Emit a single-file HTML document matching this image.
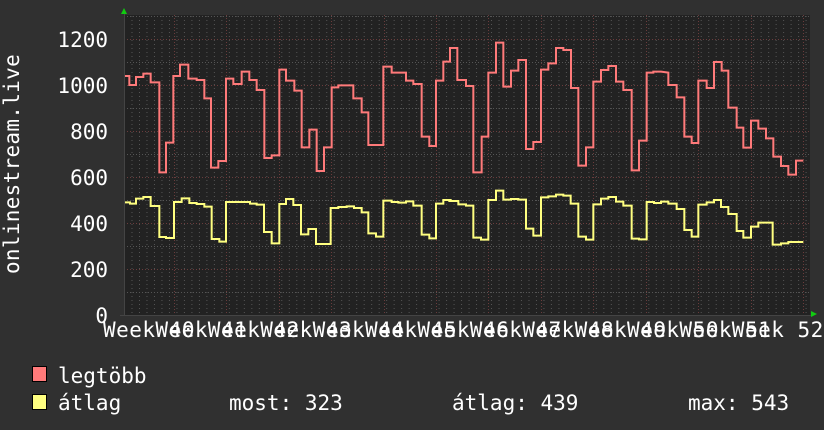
<!DOCTYPE html>
<html><head><meta charset="utf-8"><style>
html,body{margin:0;padding:0;background:#303030;}
svg{display:block}
text{font-family:"DejaVu Sans Mono","Liberation Mono",monospace;fill:#fff;font-size:21px}
</style></head><body>
<svg width="824" height="430" viewBox="0 0 824 430">
<defs>
<pattern id="vmin" x="124" y="0" width="7.49" height="4" patternUnits="userSpaceOnUse">
<rect x="0" y="0" width="1" height="1" fill="#5a5a5a"/>
</pattern>
</defs>
<rect x="0" y="0" width="824" height="430" fill="#303030"/>
<rect x="124" y="15" width="686" height="300" fill="#222"/>
<!-- vertical minor grid -->
<rect x="124" y="15" width="686" height="300" fill="url(#vmin)" opacity="0.9"/>
<!-- horizontal grid -->
<g stroke-dasharray="1,2" stroke-width="1">
<g stroke="#555">
<line x1="124" x2="810" y1="62.5" y2="62.5"/><line x1="124" x2="810" y1="108.5" y2="108.5"/>
<line x1="124" x2="810" y1="154.5" y2="154.5"/><line x1="124" x2="810" y1="200.5" y2="200.5"/>
<line x1="124" x2="810" y1="246.5" y2="246.5"/><line x1="124" x2="810" y1="292.5" y2="292.5"/>
<line x1="124" x2="810" y1="16.5" y2="16.5"/>
</g>
<g stroke="#6a3c3c">
<line x1="124" x2="810" y1="39.5" y2="39.5"/><line x1="124" x2="810" y1="85.5" y2="85.5"/>
<line x1="124" x2="810" y1="131.5" y2="131.5"/><line x1="124" x2="810" y1="177.5" y2="177.5"/>
<line x1="124" x2="810" y1="223.5" y2="223.5"/><line x1="124" x2="810" y1="269.5" y2="269.5"/>
</g>
<g stroke="#6a3c3c">
<line y1="15" y2="315" x1="174.5" x2="174.5"/><line y1="15" y2="315" x1="226.5" x2="226.5"/>
<line y1="15" y2="315" x1="279.5" x2="279.5"/><line y1="15" y2="315" x1="331.5" x2="331.5"/>
<line y1="15" y2="315" x1="384.5" x2="384.5"/><line y1="15" y2="315" x1="436.5" x2="436.5"/>
<line y1="15" y2="315" x1="488.5" x2="488.5"/><line y1="15" y2="315" x1="541.5" x2="541.5"/>
<line y1="15" y2="315" x1="593.5" x2="593.5"/><line y1="15" y2="315" x1="646.5" x2="646.5"/>
<line y1="15" y2="315" x1="698.5" x2="698.5"/><line y1="15" y2="315" x1="751.5" x2="751.5"/>
<line y1="15" y2="315" x1="803.5" x2="803.5"/>
</g>
</g>
<!-- axes -->
<line x1="124.5" y1="12" x2="124.5" y2="316" stroke="#444"/>
<line x1="120" y1="315.5" x2="812" y2="315.5" stroke="#444"/>
<polygon points="121,14 127,14 124,8" fill="#1c1"/>
<polygon points="811,311 811,317 817,314" fill="#1c1"/>

<!-- red line -->
<g fill="none" stroke="#ff7a7a" stroke-width="2">
<polyline vector-effect="non-scaling-stroke" transform="translate(100,0) scale(0.33333)" points="75,228 88,228 88,255 108,255 108,231 130,231 130,221 152,221 152,247 178,247 178,517 198,517 198,428 220,428 220,228 240,228 240,194 265,194 265,236 290,236 290,240 313,240 313,295 333,295 333,503 355,503 355,483 378,483 378,236 400,236 400,252 425,252 425,215 448,215 448,240 470,240 470,270 493,270 493,474 515,474 515,466 538,466 538,209 558,209 558,242 583,242 583,272 605,272 605,442 628,442 628,389 650,389 650,513 672,513 672,442 695,442 695,262 715,262 715,256 760,256 760,295 785,295 785,337 805,337 805,435 850,435 850,200 875,200 875,218 918,218 918,242 940,242 940,252 965,252 965,410 988,410 988,438 1008,438 1008,242 1030,242 1030,185 1050,185 1050,144 1072,144"/>
<polyline vector-effect="non-scaling-stroke" transform="translate(450,0) scale(0.33333)" points="-3,144 22,144 22,240 48,240 48,258 70,258 70,517 95,517 95,410 115,410 115,218 138,218 138,128 160,128 160,260 183,260 183,212 205,212 205,180 228,180 228,447 250,447 250,426 273,426 273,209 295,209 295,190 318,190 318,144 340,144 340,150 363,150 363,264 385,264 385,497 408,497 408,442 430,442 430,245 453,245 453,210 475,210 475,198 498,198 498,245 520,245 520,270 545,270 545,511 567,511 567,422 590,422 590,218 610,218 610,215 633,215 655,218 655,255 680,255 680,292 703,292 703,410 725,410 725,429 745,429 745,242 770,242 770,264 792,264 792,186 815,186 815,212 835,212 835,323 860,323 860,383 880,383 880,443 903,443 903,362 925,362 925,386 948,386 948,415 970,415 970,470 993,470 993,498 1015,498 1015,524 1038,524 1038,482 1060,482"/>
</g>
<!-- yellow line -->
<g fill="none" stroke="#ffff80" stroke-width="2">
<polyline vector-effect="non-scaling-stroke" transform="translate(100,0) scale(0.33333)" points="75,607 90,607 90,611 108,611 108,596 130,596 130,591 152,591 152,618 178,618 178,711 198,711 198,714 222,714 222,606 245,606 245,595 268,595 268,609 290,609 290,612 313,612 313,620 335,620 335,717 358,717 358,725 378,725 378,606 450,606 450,611 470,611 470,614 492,614 492,696 515,696 515,730 538,730 538,612 558,612 558,597 580,597 580,615 603,615 603,703 625,703 625,687 648,687 648,732 692,732 692,624 715,624 715,621 740,621 740,619 762,619 762,624 785,624 785,637 805,637 805,700 828,700 828,710 850,710 850,602 875,602 875,606 895,606 895,608 918,608 918,604 940,604 940,617 965,617 965,704 988,704 988,715 1008,715 1008,611 1030,611 1030,600 1052,600 1052,603 1075,603"/>
<polyline vector-effect="non-scaling-stroke" transform="translate(450,0) scale(0.33333)" points="-5,603 25,603 25,613 48,613 48,617 70,617 70,713 93,713 93,719 115,719 115,600 138,600 138,572 160,572 160,599 183,599 183,597 205,597 205,599 228,599 228,686 250,686 250,707 273,707 273,592 295,592 295,589 318,589 318,584 340,584 340,587 362,587 362,611 385,611 385,710 408,710 408,719 430,719 430,613 453,613 453,596 475,596 475,591 498,591 498,605 520,605 520,617 545,617 545,716 567,716 567,718 590,718 590,606 612,606 612,609 633,609 633,605 655,605 655,611 680,611 680,627 703,627 703,690 725,690 725,710 745,710 745,614 770,614 770,607 792,607 792,600 813,600 813,621 835,621 835,642 860,642 860,693 880,693 880,713 903,713 903,680 925,680 925,668 968,668 968,734 993,734 993,730 1015,730 1015,726 1060,726"/>
</g>

<!-- y labels -->
<g text-anchor="end">
<text x="108" y="47">1200</text>
<text x="108" y="93">1000</text>
<text x="108" y="139">800</text>
<text x="108" y="185">600</text>
<text x="108" y="231">400</text>
<text x="108" y="277">200</text>
<text x="108" y="323">0</text>
</g>
<text transform="translate(19,164) rotate(-90)" text-anchor="middle" letter-spacing="0.3">onlinestream.live</text>

<!-- x labels -->
<g letter-spacing="0.5">
<text x="103" y="337">Week 40</text>
<text x="155.4" y="337">Week 41</text>
<text x="207.8" y="337">Week 42</text>
<text x="260.2" y="337">Week 43</text>
<text x="312.6" y="337">Week 44</text>
<text x="365" y="337">Week 45</text>
<text x="417.4" y="337">Week 46</text>
<text x="469.8" y="337">Week 47</text>
<text x="522.2" y="337">Week 48</text>
<text x="574.6" y="337">Week 49</text>
<text x="627" y="337">Week 50</text>
<text x="679.4" y="337">Week 51</text>
<text x="731.8" y="337">Week 52</text>
</g>

<!-- legend -->
<rect x="32.5" y="366.5" width="14" height="15" fill="#ff7a7a" stroke="#000"/>
<rect x="32.5" y="394.5" width="14" height="15" fill="#ffff80" stroke="#000"/>
<text x="58" y="383">legtöbb</text>
<text x="58" y="410">átlag</text>
<text x="229" y="410">most: 323</text>
<text x="452" y="410">átlag: 439</text>
<text x="688" y="410">max: 543</text>
</svg>
</body></html>
